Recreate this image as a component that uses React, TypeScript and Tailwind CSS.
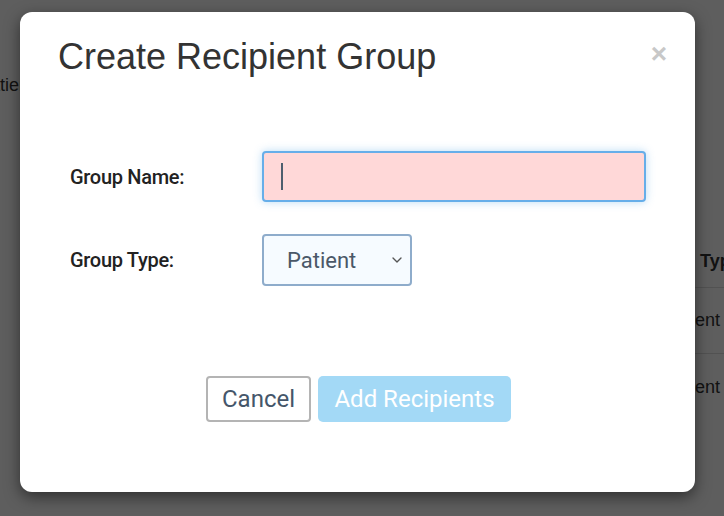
import { ChevronDown } from "lucide-react";

function BackgroundPage() {
  return (
    <div className="h-[516px] w-[724px] overflow-hidden bg-white font-['Liberation_Sans',Arial,sans-serif] text-[#333]">
      <div className="ml-[-22px] pt-[72px] text-[18px]">Patients</div>
      <div className="mt-[137px] ml-[660px] w-[200px]">
        <div className="flex h-[52px] items-center border-b border-[#ddd] pl-[40px] text-[18px] font-bold">Type</div>
        <div className="flex h-[66px] items-center border-b border-[#ddd] pl-[4px] text-[18px]">Patient</div>
        <div className="flex h-[66px] items-center pl-[4px] text-[18px]">Patient</div>
      </div>
    </div>
  );
}

export default function App() {
  return (
    <div className="relative h-[516px] w-[724px] overflow-hidden">
      <BackgroundPage />
      <div className="absolute inset-0 bg-black/[0.63]" />
      <div className="absolute left-[20px] top-[12px] flex h-[480px] w-[675px] flex-col rounded-[12px] bg-white shadow-[0_5px_15px_rgba(0,0,0,0.5)]">
        <div className="flex items-start justify-between pl-[38px] pr-[28px] pt-[23px]">
          <h1 className="font-['Liberation_Sans',Arial,sans-serif] text-[36px] leading-[44px] text-[#333]">
            Create Recipient Group
          </h1>
          <span className="mt-[1px] font-['Liberation_Sans',Arial,sans-serif] text-[28px] font-bold leading-[36px] text-[#c8c8c8]">
            ×
          </span>
        </div>
        <div className="mt-[72px] flex flex-col gap-[32px] pl-[50px] font-['Roboto',sans-serif]">
          <div className="flex items-center">
            <label className="w-[192px] text-[20px] font-medium tracking-[-0.3px] text-[#222]">Group Name:</label>
            <div className="flex h-[51px] w-[384px] items-center rounded-[4px] border-2 border-[#66aee9] bg-[#ffd8d8] pl-[17px] shadow-[0_0_8px_rgba(102,175,233,0.45)]">
              <span className="h-[27px] w-[2px] bg-[#4d5e6e]" />
            </div>
          </div>
          <div className="flex items-center">
            <label className="w-[192px] text-[20px] font-medium tracking-[-0.3px] text-[#222]">Group Type:</label>
            <div className="flex h-[52px] w-[150px] items-center justify-between rounded-[4px] border-2 border-[#8eaccb] bg-[#f6fbff] pl-[23px] pr-[5px]">
              <span className="text-[22px] text-[#4a5868]">Patient</span>
              <ChevronDown className="h-[16px] w-[16px] text-[#555]" strokeWidth={2} />
            </div>
          </div>
        </div>
        <div className="mt-[90px] flex justify-center gap-[7px] pl-[2px] font-['Roboto',sans-serif]">
          <button className="h-[46px] w-[105px] rounded-[4px] border-2 border-[#b4b4b4] bg-white text-[24px] text-[#45566a]">
            Cancel
          </button>
          <button className="h-[46px] w-[193px] rounded-[5px] bg-[#a3d9f6] text-[24px] text-white">
            Add Recipients
          </button>
        </div>
      </div>
    </div>
  );
}
